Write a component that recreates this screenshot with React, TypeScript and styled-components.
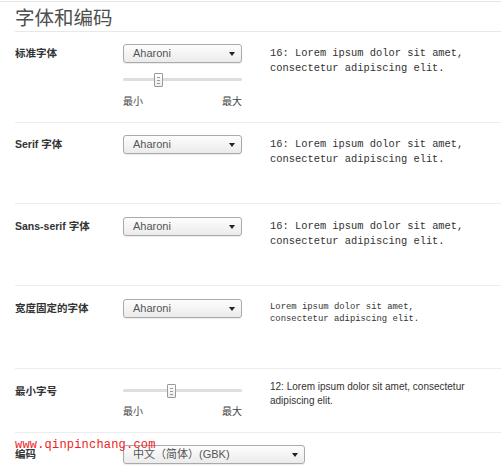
import React from "react";
import styled, { createGlobalStyle } from "styled-components";

const Global = createGlobalStyle`
  html, body { margin: 0; padding: 0; background: #fff; }
  body { font-family: "Liberation Sans", "Noto Sans CJK SC", sans-serif; color: #333; }
`;

const Page = styled.div`
  position: relative;
  width: 501px;
  margin-top: 1px;
  border-top: 1px solid #e6e6e6;
  overflow: hidden;
`;

const Header = styled.div`
  margin-left: 15px;
  height: 29px;
  border-bottom: 1px solid #e8e8e8;
`;

const Title = styled.h1`
  margin: 0;
  font-family: "Noto Sans CJK SC", sans-serif;
  font-weight: 400;
  font-size: 19.5px;
  line-height: 29px;
  color: #4f4f4f;
`;

const Section = styled.div`
  margin-left: 15px;
`;

const Row = styled.div<{ $h: number; $pt?: number }>`
  display: grid;
  grid-template-columns: 108px 147px 1fr;
  align-items: start;
  box-sizing: border-box;
  height: ${(p) => p.$h}px;
  padding-top: ${(p) => p.$pt ?? 12}px;
  border-bottom: 1px solid #ececec;
  &:last-child { border-bottom: none; }
`;

const Label = styled.div`
  font-family: "Liberation Sans", "Noto Sans CJK SC", sans-serif;
  font-weight: 700;
  font-size: 10.5px;
  line-height: 19px;
  color: #333;
`;

const Control = styled.div`
  display: flex;
  flex-direction: column;
`;

const Select = styled.div<{ $w?: number }>`
  position: relative;
  box-sizing: border-box;
  width: ${(p) => p.$w ?? 119}px;
  height: 19px;
  border: 1px solid #aaa;
  border-radius: 3px;
  background: linear-gradient(#fdfdfd, #ebebeb);
  box-shadow: 0 1px 1px rgba(0, 0, 0, 0.08);
  padding-left: 9px;
  font-family: "Liberation Sans", "Noto Sans CJK SC", sans-serif;
  font-size: 11px;
  line-height: 17px;
  color: #555;
  white-space: nowrap;
`;

const Arrow = styled.span`
  position: absolute;
  right: 6px;
  top: 7px;
  width: 0;
  height: 0;
  border-left: 3.5px solid transparent;
  border-right: 3.5px solid transparent;
  border-top: 4px solid #222;
`;

const SliderWrap = styled.div<{ $mt: number }>`
  position: relative;
  width: 119px;
  height: 14px;
  margin-top: ${(p) => p.$mt}px;
`;

const Track = styled.div`
  position: absolute;
  left: 0;
  right: 0;
  top: 5px;
  height: 3px;
  background: #dedede;
  border-radius: 2px;
`;

const Thumb = styled.div`
  position: absolute;
  top: 0;
  box-sizing: border-box;
  width: 9px;
  height: 14px;
  border: 1px solid #9a9a9a;
  border-radius: 1px;
  background: linear-gradient(#ffffff, #ececec);
  display: flex;
  flex-direction: column;
  justify-content: center;
  align-items: center;
  gap: 2px;
`;

const Grip = styled.span`
  display: block;
  width: 3px;
  height: 1px;
  background: #999;
`;

const Ends = styled.div<{ $mt: number }>`
  display: flex;
  justify-content: space-between;
  width: 119px;
  margin-top: ${(p) => p.$mt}px;
  font-family: "Noto Sans CJK SC", sans-serif;
  font-size: 10px;
  line-height: 14px;
  color: #444;
`;

const Desc = styled.div<{ $size: number; $lh: number; $mono?: boolean; $mt: number }>`
  font-family: ${(p) => (p.$mono ? '"Liberation Mono", monospace' : '"Liberation Sans", sans-serif')};
  font-size: ${(p) => p.$size}px;
  line-height: ${(p) => p.$lh}px;
  margin-top: ${(p) => p.$mt}px;
  color: #333;
`;

const Watermark = styled.div`
  position: absolute;
  left: 15px;
  top: 436px;
  font-family: "Liberation Mono", monospace;
  font-size: 12px;
  line-height: 14px;
  color: #ee1c25;
  letter-spacing: 0.2px;
  pointer-events: none;
`;

function Slider({ pos }: { pos: number }) {
  return (
    <Thumb style={{ left: pos }}>
      <Grip />
      <Grip />
      <Grip />
    </Thumb>
  );
}

function FontSelect({ value, w }: { value: string; w?: number }) {
  return (
    <Select $w={w}>
      {value}
      <Arrow />
    </Select>
  );
}

const lorem1 = "Lorem ipsum dolor sit amet,";
const lorem2 = "consectetur adipiscing elit.";

export default function App() {
  return (
    <>
      <Global />
      <Page>
        <Header>
          <Title>字体和编码</Title>
        </Header>
        <Section>
          <Row $h={91}>
            <Label>标准字体</Label>
            <Control>
              <FontSelect value="Aharoni" />
              <SliderWrap $mt={10}>
                <Track />
                <Slider pos={31} />
              </SliderWrap>
              <Ends $mt={7}>
                <span>最小</span>
                <span>最大</span>
              </Ends>
            </Control>
            <Desc $mono $size={10.4} $lh={15} $mt={2}>
              16: {lorem1}
              <br />
              {lorem2}
            </Desc>
          </Row>
          <Row $h={81}>
            <Label>Serif 字体</Label>
            <Control>
              <FontSelect value="Aharoni" />
            </Control>
            <Desc $mono $size={10.4} $lh={15} $mt={2}>
              16: {lorem1}
              <br />
              {lorem2}
            </Desc>
          </Row>
          <Row $h={82} $pt={13}>
            <Label>Sans-serif 字体</Label>
            <Control>
              <FontSelect value="Aharoni" />
            </Control>
            <Desc $mono $size={10.4} $lh={15} $mt={2}>
              16: {lorem1}
              <br />
              {lorem2}
            </Desc>
          </Row>
          <Row $h={83} $pt={13}>
            <Label>宽度固定的字体</Label>
            <Control>
              <FontSelect value="Aharoni" />
            </Control>
            <Desc $mono $size={8.9} $lh={12} $mt={2}>
              {lorem1}
              <br />
              {lorem2}
            </Desc>
          </Row>
          <Row $h={64} $pt={13}>
            <Label>最小字号</Label>
            <Control>
              <SliderWrap $mt={2}>
                <Track />
                <Slider pos={44} />
              </SliderWrap>
              <Ends $mt={6}>
                <span>最小</span>
                <span>最大</span>
              </Ends>
            </Control>
            <Desc $size={10} $lh={14} $mt={-2}>
              12: Lorem ipsum dolor sit amet, consectetur
              <br />
              adipiscing elit.
            </Desc>
          </Row>
          <Row $h={40} $pt={12}>
            <Label>编码</Label>
            <Control>
              <FontSelect value="中文（简体）(GBK)" w={182} />
            </Control>
          </Row>
        </Section>
        <Watermark>www.qinpinchang.com</Watermark>
      </Page>
    </>
  );
}
